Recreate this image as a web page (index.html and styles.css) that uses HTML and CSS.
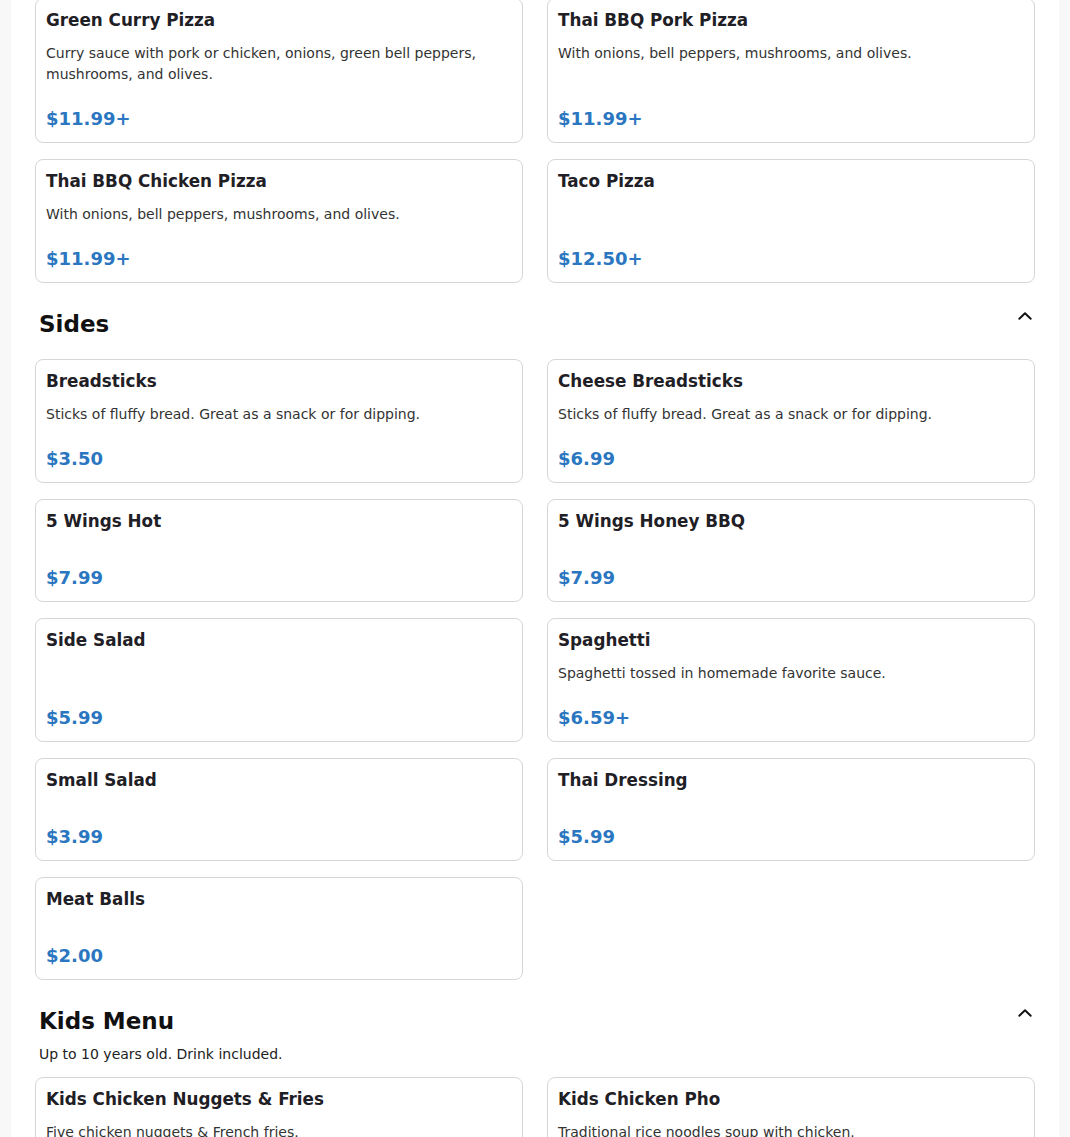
FILE: index.html
```html
<!DOCTYPE html>
<html lang="en">
<head>
<meta charset="utf-8">
<title>Menu</title>
<link rel="stylesheet" href="styles.css">
</head>
<body>
<main class="page">
  <section class="section first">
    <div class="grid">
      <div class="card"><div class="body"><h3 class="title">Green Curry Pizza</h3><p class="desc">Curry sauce with pork or chicken, onions, green bell peppers, mushrooms, and olives.</p></div><div class="price">$11.99+</div></div>
      <div class="card"><div class="body"><h3 class="title">Thai BBQ Pork Pizza</h3><p class="desc">With onions, bell peppers, mushrooms, and olives.</p></div><div class="price">$11.99+</div></div>
      <div class="card"><div class="body"><h3 class="title">Thai BBQ Chicken Pizza</h3><p class="desc">With onions, bell peppers, mushrooms, and olives.</p></div><div class="price">$11.99+</div></div>
      <div class="card"><div class="body"><h3 class="title">Taco Pizza</h3></div><div class="price">$12.50+</div></div>
    </div>
  </section>

  <section class="section">
    <header class="head">
      <div class="head-row">
        <h2 class="heading">Sides</h2>
        <button class="toggle" aria-label="Collapse"><svg width="14" height="14" viewBox="0 0 14 14"><path d="M1.3 9.8 L7 4.2 L12.7 9.8" fill="none" stroke="#111" stroke-width="1.9" stroke-linecap="round" stroke-linejoin="round"/></svg></button>
      </div>
    </header>
    <div class="grid">
      <div class="card"><div class="body"><h3 class="title">Breadsticks</h3><p class="desc">Sticks of fluffy bread. Great as a snack or for dipping.</p></div><div class="price">$3.50</div></div>
      <div class="card"><div class="body"><h3 class="title">Cheese Breadsticks</h3><p class="desc">Sticks of fluffy bread. Great as a snack or for dipping.</p></div><div class="price">$6.99</div></div>
      <div class="card"><div class="body"><h3 class="title">5 Wings Hot</h3></div><div class="price">$7.99</div></div>
      <div class="card"><div class="body"><h3 class="title">5 Wings Honey BBQ</h3></div><div class="price">$7.99</div></div>
      <div class="card"><div class="body"><h3 class="title">Side Salad</h3></div><div class="price">$5.99</div></div>
      <div class="card"><div class="body"><h3 class="title">Spaghetti</h3><p class="desc">Spaghetti tossed in homemade favorite sauce.</p></div><div class="price">$6.59+</div></div>
      <div class="card"><div class="body"><h3 class="title">Small Salad</h3></div><div class="price">$3.99</div></div>
      <div class="card"><div class="body"><h3 class="title">Thai Dressing</h3></div><div class="price">$5.99</div></div>
      <div class="card"><div class="body"><h3 class="title">Meat Balls</h3></div><div class="price">$2.00</div></div>
    </div>
  </section>

  <section class="section">
    <header class="head">
      <div class="head-row">
        <h2 class="heading">Kids Menu</h2>
        <button class="toggle" aria-label="Collapse"><svg width="14" height="14" viewBox="0 0 14 14"><path d="M1.3 9.8 L7 4.2 L12.7 9.8" fill="none" stroke="#111" stroke-width="1.9" stroke-linecap="round" stroke-linejoin="round"/></svg></button>
      </div>
      <p class="subtitle">Up to 10 years old. Drink included.</p>
    </header>
    <div class="grid">
      <div class="card"><div class="body"><h3 class="title">Kids Chicken Nuggets &amp; Fries</h3><p class="desc">Five chicken nuggets &amp; French fries.</p></div><div class="price">$6.99</div></div>
      <div class="card"><div class="body"><h3 class="title">Kids Chicken Pho</h3><p class="desc">Traditional rice noodles soup with chicken.</p></div><div class="price">$6.99</div></div>
    </div>
  </section>
</main>
</body>
</html>
```

FILE: styles.css
```css
html, body {
  margin: 0;
  padding: 0;
}

body {
  background: #f8f8f8;
  font-family: "DejaVu Sans", Verdana, sans-serif;
  color: #222;
}

.page {
  max-width: 1048px;
  margin: 0 auto;
  background: #fff;
  padding: 0 24px 40px;
  box-sizing: border-box;
}

.section {
  padding-top: 28px;
}

.section.first {
  padding-top: 0;
  margin-top: -2px;
}

.head {
  padding: 0 3px 0 4px;
  margin-bottom: 22px;
}

.head-row {
  display: flex;
  align-items: center;
  justify-content: space-between;
}

.heading {
  margin: 0;
  font-size: 23px;
  line-height: 26px;
  font-weight: bold;
  color: #111;
}

.toggle {
  border: 0;
  background: none;
  padding: 0;
  width: 14px;
  height: 14px;
  display: flex;
  align-items: center;
  justify-content: center;
  margin-top: -17px;
  cursor: pointer;
}

.subtitle {
  margin: 10px 0 -10px;
  font-size: 14px;
  line-height: 21px;
  color: #222;
}

.grid {
  display: grid;
  grid-template-columns: 1fr 1fr;
  gap: 16px 24px;
}

.card {
  display: flex;
  flex-direction: column;
  border: 1px solid #d6d6d6;
  border-radius: 8px;
  padding: 11px 10px 12px;
  background: #fff;
}

.body {
  flex: 1;
  padding-bottom: 23px;
}

.title {
  margin: 0 0 12px;
  font-size: 16.8px;
  line-height: 21px;
  font-weight: bold;
  color: #1f2025;
}

.desc {
  margin: 0;
  font-size: 14px;
  line-height: 21px;
  color: #333;
}

.price {
  font-size: 18px;
  line-height: 22px;
  font-weight: bold;
  color: #2a76c0;
}
```
